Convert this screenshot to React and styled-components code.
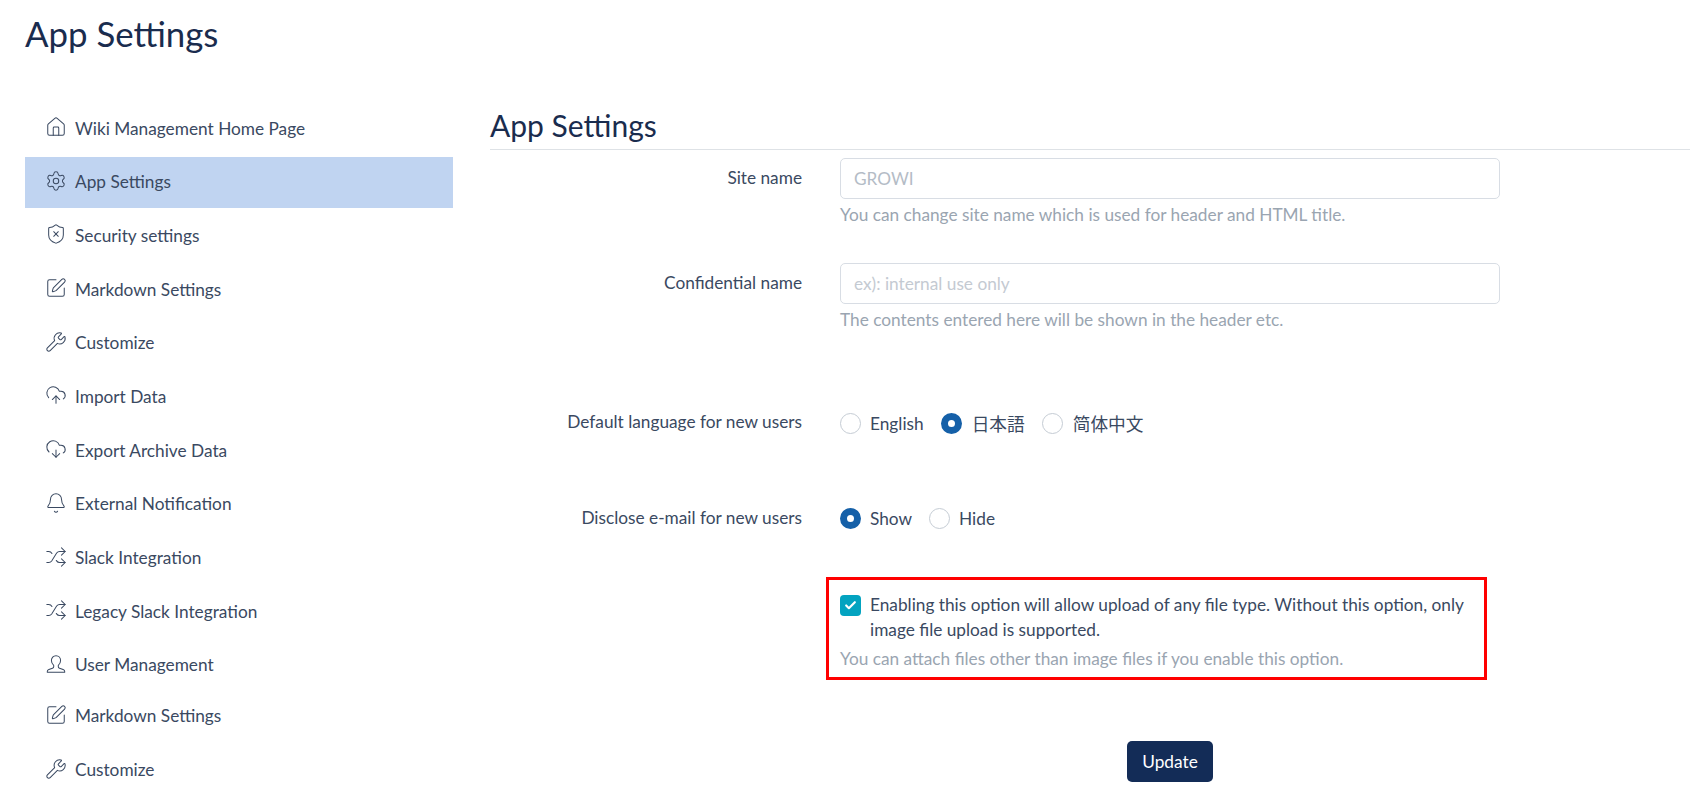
import React from 'react';
import styled, { createGlobalStyle } from 'styled-components';
import { Home, Settings, ShieldX, SquarePen, Wrench, CloudUpload, CloudDownload, Bell, Shuffle, Check } from 'lucide-react';

const Global = createGlobalStyle`
  html, body { margin: 0; padding: 0; background: #fff; }
  body { font-family: Lato, "Noto Sans CJK JP", sans-serif; color: #3f4d63; overflow: hidden; }
  *, *::before, *::after { box-sizing: border-box; }
`;
const Page = styled.div`width: 1690px; height: 798px; overflow: hidden; padding: 0 0 0 25px;`;
const Title = styled.h1`margin: 0; padding-top: 11px; height: 90px; font-size: 34.8px; line-height: 46px; font-weight: 400; color: #1a2c4e;`;
const Columns = styled.div`display: flex; gap: 37px;`;
const Side = styled.nav`width: 428px; display: flex; flex-direction: column; padding-top: 13px; flex: none;`;
const Item = styled.a`
  display: flex; align-items: center; height: 51px; margin-bottom: ${p => p.$gap ?? 2.7}px; padding: 0 0 1px 20px; gap: 8px;
  font-size: 17.25px; color: #3a4961;
  background: ${p => p.$active ? '#c0d4f1' : 'transparent'};
  svg { flex: none; width: 22px; height: 22px; stroke-width: 1.1; margin-top: -2px; }
`;
const Main = styled.main`flex: 1; min-width: 0;`;
const Heading = styled.h2`margin: 15px 0 0; height: 45px; font-size: 30px; line-height: 40px; font-weight: 400; color: #1a2c4e; border-bottom: 1px solid #dee2e6;`;
const Row = styled.div`display: grid; grid-template-columns: 312px 660px; column-gap: 38px; margin-top: ${p => p.$top}px;`;
const Label = styled.label`text-align: right; font-size: 17.25px; line-height: 24px; color: #3a4961; padding-top: ${p => p.$pt ?? 0}px;`;
const Input = styled.input`
  display: block; width: 100%; height: 41px; border: 1px solid #d8dde4; border-radius: 5px; padding: 0 13px;
  font: 17.25px Lato, sans-serif; color: #b4bcc6; background: #fff;
  &::placeholder { color: #c4cad2; opacity: 1; }
`;
const Help = styled.div`font-size: 17.25px; line-height: 24px; color: #9aa5b1; margin-top: ${p => p.$top ?? 4}px;`;
const Radios = styled.div`display: flex; align-items: center; height: 24px; margin-top: ${p => p.$top ?? 0}px;`;
const Radio = styled.span`
  display: inline-flex; align-items: center; gap: ${p => p.$cjk ? 10 : 9}px; margin-right: 17px;
  font-size: ${p => p.$cjk ? 17.7 : 17.25}px; color: #3a4961;
  &::before {
    content: ""; width: 21px; height: 21px; border-radius: 50%; flex: none; background: #fff;
    border: ${p => p.$on ? '7px solid #1560a8' : '1px solid #c5ccd4'};
  }
`;
const Box = styled.div`
  width: 661px; height: 103px; margin: 0 0 0 -14px; border: 3px solid #f00; padding: 12px 11px 0 11px;
`;
const CheckLine = styled.div`display: flex; gap: 9px; font-size: 17.25px; line-height: 25px; color: #3a4961;`;
const CheckMark = styled.span`
  width: 21px; height: 21px; flex: none; margin-top: 3px; border-radius: 4px; background: #03a3c0; color: #fff;
  display: flex; align-items: center; justify-content: center;
  svg { width: 13px; height: 13px; stroke-width: 4; }
`;
const Actions = styled.div`display: flex; margin-top: 61px; padding-left: 637px;`;
const Button = styled.button`
  width: 86px; height: 41px; border: none; border-radius: 5px; background: #132c57; color: #fff;
  font: 17.25px Lato, sans-serif;
`;
const UserIcon = () => (
  <svg viewBox="0 0 24 24" fill="none" stroke="currentColor" strokeLinecap="round" strokeLinejoin="round">
    <path d="M12 3c-3 0-5 2.300-5 5.300 0 2.200 1 4 2.500 5.200v1.500c0 .8-.5 1.300-1.300 1.600l-4 1.500c-1 .4-1.700 1-1.700 2.100V21h19v-.8c0-1.100-.7-1.700-1.700-2.100l-4-1.500c-.8-.3-1.300-.8-1.300-1.600v-1.500c1.500-1.200 2.500-3 2.500-5.200C17 5.300 15 3 12 3z" />
  </svg>
);

const items = [
  [Home, 'Wiki Management Home Page'], [Settings, 'App Settings', true], [ShieldX, 'Security settings'],
  [SquarePen, 'Markdown Settings'], [Wrench, 'Customize'], [CloudUpload, 'Import Data'], [CloudDownload, 'Export Archive Data'],
  [Bell, 'External Notification'], [Shuffle, 'Slack Integration'], [Shuffle, 'Legacy Slack Integration'],
  [UserIcon, 'User Management', false, 0], [SquarePen, 'Markdown Settings'], [Wrench, 'Customize'],
];

export default function App() {
  return (
    <Page>
      <Global />
      <Title>App Settings</Title>
      <Columns>
        <Side>
          {items.map(([Icon, text, active, gap], i) => (
            <Item key={i} $active={active} $gap={gap}><Icon />{text}</Item>
          ))}
        </Side>
        <Main>
          <Heading>App Settings</Heading>
          <Row $top={8}>
            <Label $pt={8}>Site name</Label>
            <div>
              <Input defaultValue="GROWI" />
              <Help>You can change site name which is used for header and HTML title.</Help>
            </div>
          </Row>
          <Row $top={36}>
            <Label $pt={8}>Confidential name</Label>
            <div>
              <Input placeholder="ex): internal use only" />
              <Help>The contents entered here will be shown in the header etc.</Help>
            </div>
          </Row>
          <Row $top={78}>
            <Label>Default language for new users</Label>
            <Radios $top={1}>
              <Radio>English</Radio>
              <Radio $on $cjk>日本語</Radio>
              <Radio $cjk>简体中文</Radio>
            </Radios>
          </Row>
          <Row $top={71}>
            <Label>Disclose e-mail for new users</Label>
            <Radios>
              <Radio $on>Show</Radio>
              <Radio>Hide</Radio>
            </Radios>
          </Row>
          <Row $top={47}>
            <div />
            <Box>
              <CheckLine>
                <CheckMark><Check /></CheckMark>
                <span>Enabling this option will allow upload of any file type. Without this option, only image file upload is supported.</span>
              </CheckLine>
              <Help $top={5}>You can attach files other than image files if you enable this option.</Help>
            </Box>
          </Row>
          <Actions><Button>Update</Button></Actions>
        </Main>
      </Columns>
    </Page>
  );
}
